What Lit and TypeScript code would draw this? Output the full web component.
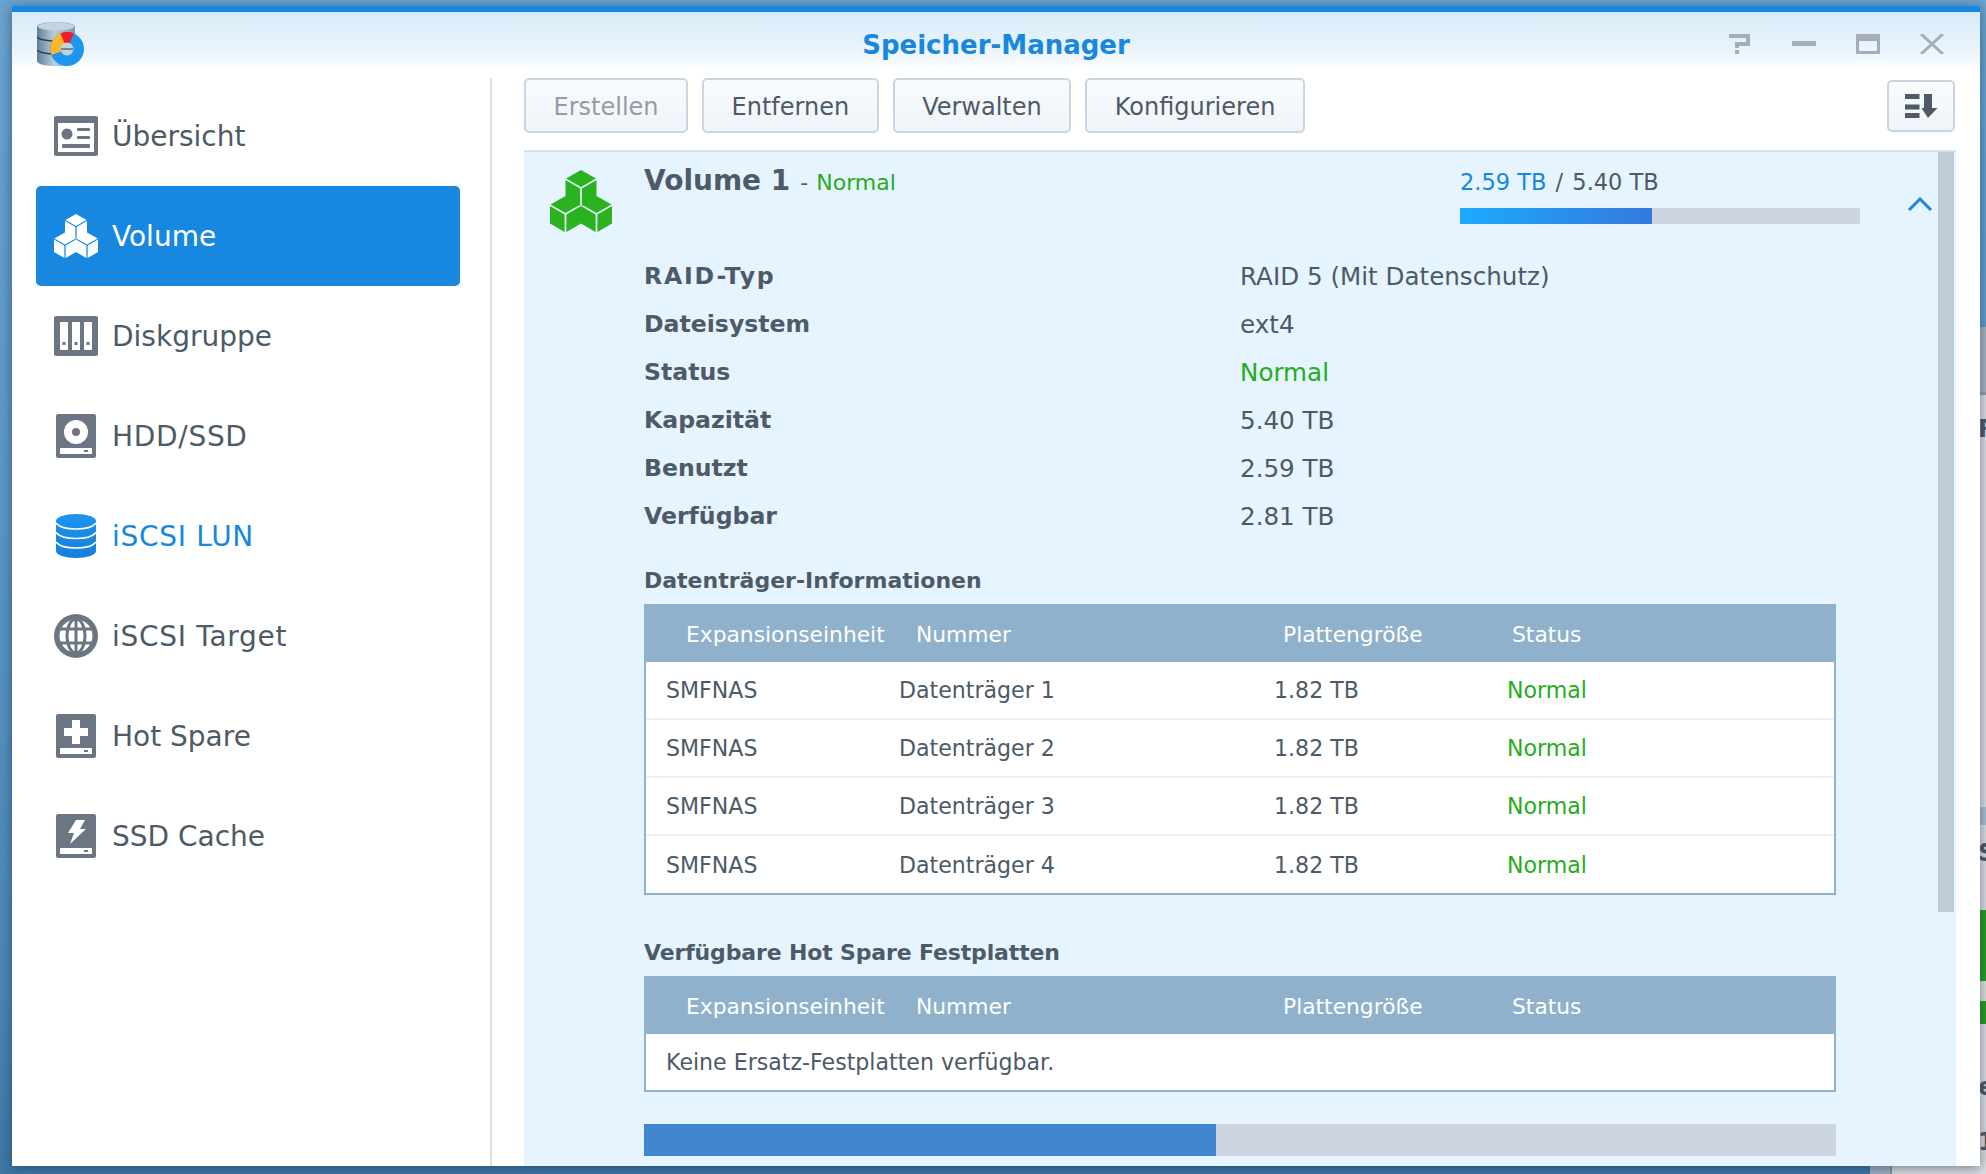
import { LitElement, html, css, svg } from 'lit';
import { customElement } from 'lit/decorators.js';

const cube = (cx: number, ty: number) => svg`
  <path d="M${cx} ${ty}L${cx + 15} ${ty + 8.5}L${cx} ${ty + 17}L${cx - 15} ${ty + 8.5}Z" />
  <path d="M${cx - 15.5} ${ty + 10}L${cx - 0.9} ${ty + 18.4}V${ty + 36}L${cx - 15.5} ${ty + 27.5}Z" />
  <path d="M${cx + 15.5} ${ty + 10}L${cx + 0.9} ${ty + 18.4}V${ty + 36}L${cx + 15.5} ${ty + 27.5}Z" />
`;

const cubes = (color: string, size: number) => html`
  <svg width="${size}" height="${size}" viewBox="0 0 62 62" fill="${color}">
    ${cube(31, 0)}${cube(15.5, 26)}${cube(46.5, 26)}
  </svg>
`;

const driveBar = svg`
  <rect x="4" y="34" width="32" height="6" fill="#fff" />
  <rect x="28" y="36" width="4" height="2" fill="#6b7682" />
`;

const ICONS: Record<string, unknown> = {
  overview: html`<svg width="44" height="40" viewBox="0 0 44 40">
    <rect width="44" height="40" rx="2" fill="#6b7682" />
    <rect x="4" y="7" width="36" height="29" fill="#fff" />
    <circle cx="13" cy="18" r="5.5" fill="#6b7682" />
    <rect x="23" y="12" width="13" height="3" rx="1" fill="#6b7682" />
    <rect x="23" y="20" width="13" height="3" rx="1" fill="#6b7682" />
    <rect x="8" y="28" width="28" height="4" rx="1" fill="#6b7682" />
  </svg>`,
  group: html`<svg width="44" height="40" viewBox="0 0 44 40">
    <rect width="44" height="40" rx="2" fill="#6b7682" />
    <rect x="6" y="6" width="8" height="28" fill="#fff" />
    <rect x="18" y="6" width="8" height="28" fill="#fff" />
    <rect x="30" y="6" width="8" height="28" fill="#fff" />
    <rect x="8.5" y="26" width="3" height="3" fill="#6b7682" />
    <rect x="20.5" y="26" width="3" height="3" fill="#6b7682" />
    <rect x="32.5" y="26" width="3" height="3" fill="#6b7682" />
  </svg>`,
  hdd: html`<svg width="40" height="44" viewBox="0 0 40 44">
    <rect width="40" height="44" rx="2" fill="#6b7682" />
    <circle cx="20" cy="18" r="12" fill="#fff" />
    <circle cx="20" cy="18" r="4" fill="#6b7682" />
    ${driveBar}
  </svg>`,
  lun: html`<svg width="40" height="44" viewBox="0 0 40 44">
    <defs>
      <linearGradient id="db" x1="0" y1="0" x2="0" y2="1">
        <stop offset="0" stop-color="#1f95ee" />
        <stop offset="1" stop-color="#1580dc" />
      </linearGradient>
    </defs>
    <path d="M0 7C0 3 9 0 20 0S40 3 40 7V37C40 41 31 44 20 44S0 41 0 37Z" fill="url(#db)" />
    <g fill="none" stroke="#fff" stroke-width="1.6">
      <path d="M0 9C3 13 11 15 20 15S37 13 40 9" />
      <path d="M0 18.5C3 22.5 11 24.5 20 24.5S37 22.5 40 18.5" />
      <path d="M0 28C3 32 11 34 20 34S37 32 40 28" />
    </g>
  </svg>`,
  globe: html`<svg width="44" height="44" viewBox="0 0 44 44">
    <circle cx="22" cy="22" r="22" fill="#6b7682" />
    <circle cx="22" cy="22" r="16.5" fill="#fff" />
    <g fill="none" stroke="#6b7682" stroke-width="3">
      <ellipse cx="22" cy="22" rx="9" ry="17" />
      <path d="M22 4V40M4 15H40M4 29H40" />
    </g>
  </svg>`,
  spare: html`<svg width="40" height="44" viewBox="0 0 40 44">
    <rect width="40" height="44" rx="2" fill="#6b7682" />
    <path d="M16 6H24V14H32V22H24V30H16V22H8V14H16Z" fill="#fff" />
    ${driveBar}
  </svg>`,
  cache: html`<svg width="40" height="44" viewBox="0 0 40 44">
    <rect width="40" height="44" rx="2" fill="#6b7682" />
    <path d="M20 6H29L24 15H30L14 30L18 19H12Z" fill="#fff" />
    ${driveBar}
  </svg>`,
};

const NAV = [
  { label: 'Übersicht', icon: 'overview' },
  { label: 'Volume', icon: 'volume', active: true },
  { label: 'Diskgruppe', icon: 'group' },
  { label: 'HDD/SSD', icon: 'hdd', wide: true },
  { label: 'iSCSI LUN', icon: 'lun', link: true, wide: true },
  { label: 'iSCSI Target', icon: 'globe', wide: true },
  { label: 'Hot Spare', icon: 'spare' },
  { label: 'SSD Cache', icon: 'cache' },
];

const INFO = [
  ['RAID-Typ', 'RAID 5 (Mit Datenschutz)'],
  ['Dateisystem', 'ext4'],
  ['Status', 'Normal'],
  ['Kapazität', '5.40 TB'],
  ['Benutzt', '2.59 TB'],
  ['Verfügbar', '2.81 TB'],
];

@customElement('app-root')
export class AppRoot extends LitElement {
  static styles = css`
    :host {
      display: block;
      position: relative;
      width: 1986px;
      height: 1174px;
      overflow: hidden;
      background: linear-gradient(180deg, #6ba4d0 0%, #5a98c8 45%, #4b87b6 85%, #3f78a6 100%);
      font-family: 'DejaVu Sans', Verdana, sans-serif;
      color: #4d5a67;
    }
    .back {
      position: absolute;
      left: 1870px;
      top: 327px;
      width: 116px;
      height: 847px;
      background: #dcdfe3;
    }
    .back-side {
      position: absolute;
      left: 0;
      top: 0;
      width: 20px;
      height: 847px;
      background: #a3b3c3;
      border-right: 2px solid #8c97a3;
    }
    .back-head {
      position: relative;
      height: 65px;
      background: #a8b5c2;
      border-bottom: 3px solid #9a9ea3;
    }
    .back-strip {
      position: absolute;
      left: 0;
      width: 116px;
      height: 18px;
      top: 480px;
      background: #a9c0d6;
    }
    .back-green {
      position: absolute;
      left: 110px;
      top: 583px;
      width: 6px;
      height: 114px;
      background: #2a9c22;
    }
    .back-notch {
      position: absolute;
      left: 110px;
      top: 654px;
      width: 6px;
      height: 20px;
      background: #dfe3df;
    }
    .back-frag {
      position: absolute;
      left: 108px;
      font-size: 24px;
      font-weight: bold;
      line-height: 24px;
      color: #4d5a67;
    }
    .window {
      position: absolute;
      left: 12px;
      top: 6px;
      width: 1968px;
      height: 1160px;
      display: flex;
      flex-direction: column;
      background: #fff;
      border-top: 6px solid #1787e0;
      box-sizing: border-box;
      box-shadow: 0 2px 12px rgba(20, 40, 60, 0.55);
    }
    .titlebar {
      height: 60px;
      flex: none;
      position: relative;
      display: flex;
      align-items: center;
      justify-content: center;
      background: linear-gradient(180deg, #d9ebf8 0%, #e9f3fb 60%, #ffffff 100%);
    }
    .title {
      font-size: 26px;
      font-weight: bold;
      color: #1787e0;
      margin-top: 6px;
    }
    .logo {
      position: absolute;
      left: 25px;
      top: 10px;
    }
    .controls {
      position: absolute;
      right: 36px;
      top: 22px;
      display: flex;
      gap: 40px;
    }
    .body {
      flex: 1;
      display: flex;
      min-height: 0;
    }
    .sidebar {
      width: 480px;
      flex: none;
      box-sizing: border-box;
      margin-top: 6px;
      padding: 8px 30px 0 24px;
      border-right: 2px solid #e2e2e2;
    }
    .nav-item {
      height: 100px;
      display: flex;
      align-items: center;
      border-radius: 5px;
      font-size: 28px;
    }
    .nav-item.wide {
      letter-spacing: 0.7px;
    }
    .nav-icon {
      width: 44px;
      margin-left: 18px;
      margin-right: 14px;
      display: flex;
      justify-content: center;
    }
    .nav-icon svg {
      display: block;
    }
    .nav-item.active {
      background: #1787e0;
      color: #fff;
    }
    .nav-item.link {
      color: #1787e0;
    }
    .main {
      flex: 1;
      min-width: 0;
      display: flex;
      flex-direction: column;
      padding: 6px 24px 0 32px;
    }
    .toolbar {
      height: 55px;
      flex: none;
      display: flex;
      gap: 14px;
      align-items: center;
    }
    .btn {
      height: 55px;
      box-sizing: border-box;
      padding: 2px 27.5px 0;
      display: flex;
      align-items: center;
      border: 2px solid #c9d5e1;
      border-radius: 5px;
      background: linear-gradient(180deg, #f9fbfd 0%, #eff4f9 100%);
      font-size: 24px;
    }
    .btn.off {
      color: #939ca7;
    }
    .btn.sort {
      margin-left: auto;
      margin-right: 1px;
      height: 52px;
      width: 68px;
      padding: 0;
      justify-content: center;
    }
    .panel {
      margin-top: 17px;
      flex: 1;
      min-height: 0;
      position: relative;
      overflow: hidden;
      display: flex;
      box-sizing: border-box;
      border-top: 2px solid #d5e3ee;
      background: #e5f4fe;
      padding-left: 26px;
    }
    .scroll {
      position: absolute;
      right: 2px;
      top: 0;
      width: 16px;
      height: 760px;
      background: #becdd6;
    }
    .vol-icon {
      width: 94px;
      flex: none;
      padding-top: 18px;
    }
    .vol-icon svg {
      display: block;
    }
    .content {
      width: 1192px;
      flex: none;
    }
    .chev {
      margin-left: 72px;
      margin-top: 45px;
    }
    .head {
      margin-top: 14px;
      display: flex;
      justify-content: space-between;
    }
    .vol-title {
      height: 32px;
      line-height: 32px;
      margin-top: -1px;
      font-size: 22px;
    }
    .vol-title b {
      font-size: 28px;
    }
    .vol-title .dash {
      margin: 0 1px 0 3px;
    }
    .ok {
      color: #27ac1c;
    }
    .usage {
      width: 400px;
      margin-right: -24px;
      flex: none;
      font-size: 22.5px;
      line-height: 32px;
    }
    .usage .used {
      color: #1787e0;
    }
    .usage .slash {
      margin: 0 2px;
    }
    .usage-track {
      margin-top: 10px;
      height: 16px;
      background: #cdd6e0;
    }
    .usage-fill {
      height: 16px;
      background: linear-gradient(90deg, #1cabff, #3578dc);
    }
    .info {
      margin-top: 28px;
      display: grid;
      grid-template-columns: 596px 1fr;
      grid-auto-rows: 48px;
      align-items: center;
      font-size: 24.6px;
    }
    .info b {
      font-size: 23.6px;
    }
    .info b.wide {
      letter-spacing: 1.8px;
    }
    .section {
      height: 32px;
      line-height: 32px;
      margin: 25px 0 7px;
      font-size: 22px;
      font-weight: bold;
    }
    .section.second {
      margin-top: 42px;
      letter-spacing: -0.15px;
    }
    .row {
      display: grid;
      align-items: center;
    }
    .thead {
      height: 58px;
      box-sizing: border-box;
      padding: 2px 0 0 42px;
      grid-template-columns: 230px 367px 229px 1fr;
      background: #8fb1cb;
      color: #fff;
      font-size: 21.8px;
    }
    .tbody {
      background: #fff;
      border: 2px solid #8fb1cb;
      border-top: none;
      font-size: 22.1px;
    }
    .tbody .row {
      height: 56px;
      padding-left: 20px;
      grid-template-columns: 233px 375px 233px 1fr;
      border-bottom: 2px solid #eaf0f5;
    }
    .tbody .row:last-child {
      height: 57px;
      border-bottom: none;
    }
    .tbody .empty {
      grid-template-columns: 1fr;
      height: 56px !important;
    }
    .bottom-track {
      margin-top: 32px;
      height: 32px;
      background: #cdd6e0;
    }
    .bottom-fill {
      height: 32px;
      background: #4085cd;
    }
  `;

  render() {
    return html`
      <div class="back">
        <div class="back-side"></div>
        <div class="back-head"></div>
        <div class="back-frag" style="top:90px">R</div>
        <div class="back-strip"></div>
        <div class="back-frag" style="top:514px">S</div>
        <div class="back-green"></div>
        <div class="back-notch"></div>
        <div class="back-frag" style="top:748px">e</div>
        <div class="back-frag" style="top:803px">1</div>
      </div>
      <div class="window">
        <div class="titlebar">
          <svg class="logo" width="50" height="50" viewBox="0 0 50 50">
            <defs>
              <linearGradient id="cyl" x1="0" y1="0" x2="1" y2="0">
                <stop offset="0" stop-color="#5f7f97" />
                <stop offset="0.45" stop-color="#b7cfdf" />
                <stop offset="1" stop-color="#7d99ad" />
              </linearGradient>
            </defs>
            <path d="M0 5C0 2 8 0 19 0S38 2 38 5V39C38 42 30 44 19 44S0 42 0 39Z" fill="url(#cyl)" />
            <ellipse cx="19" cy="4.5" rx="18" ry="4" fill="#c3d5e1" />
            <path d="M0 15C3 18 10 19 19 19S35 18 38 15M0 28C3 31 10 32 19 32S35 31 38 28" fill="none" stroke="#2e3d49" stroke-width="1.6" />
            <circle cx="30" cy="27" r="17" fill="#1f96ee" />
            <path d="M30 27L14.5 33A17 17 0 0 1 24 11Z" fill="#fbb52d" />
            <path d="M30 27L23.5 11.5A17 17 0 0 1 37 11.5Z" fill="#ee1c25" />
            <circle cx="30" cy="27" r="6.5" fill="#c2d2dc" />
            <path d="M24 27H36" stroke="#44525e" stroke-width="1.2" />
          </svg>
          <div class="title">Speicher-Manager</div>
          <div class="controls">
            <svg width="24" height="20" viewBox="0 0 24 20" fill="none" stroke="#a5aeb6" stroke-width="4">
              <path d="M1 2H20V10H9V14" />
              <rect x="7" y="16" width="4" height="4" fill="#a5aeb6" stroke="none" />
            </svg>
            <svg width="24" height="20" viewBox="0 0 24 20">
              <rect y="7" width="24" height="5" fill="#a5aeb6" />
            </svg>
            <svg width="24" height="20" viewBox="0 0 24 20" fill="none">
              <path d="M0 0H24V20H0ZM3 7V17H21V7Z" fill="#a5aeb6" fill-rule="evenodd" />
            </svg>
            <svg width="24" height="20" viewBox="0 0 24 20" fill="none" stroke="#a5aeb6" stroke-width="3">
              <path d="M1 0L23 20M23 0L1 20" />
            </svg>
          </div>
        </div>
        <div class="body">
          <nav class="sidebar">
            ${NAV.map(
              (n) => html`
                <div class="nav-item ${n.active ? 'active' : ''} ${n.link ? 'link' : ''} ${n.wide ? 'wide' : ''}">
                  <div class="nav-icon">${n.icon === 'volume' ? cubes('#fff', 46) : ICONS[n.icon]}</div>
                  ${n.label}
                </div>
              `,
            )}
          </nav>
          <div class="main">
            <div class="toolbar">
              <div class="btn off">Erstellen</div>
              <div class="btn">Entfernen</div>
              <div class="btn">Verwalten</div>
              <div class="btn">Konfigurieren</div>
              <div class="btn sort">
                <svg width="33" height="24" viewBox="0 0 33 24" fill="#4f5a65">
                  <rect width="14.5" height="5" />
                  <rect y="10.5" width="14.5" height="5" />
                  <rect y="19" width="14.5" height="5" />
                  <path d="M19 0H27V14H32.5L23 24L16.5 14H19Z" />
                </svg>
              </div>
            </div>
            <div class="panel">
              <div class="vol-icon">${cubes('#2bb21f', 62)}</div>
              <div class="content">
                <div class="head">
                  <div class="vol-title"><b>Volume 1</b><span class="dash"> -</span> <span class="ok">Normal</span></div>
                  <div class="usage">
                    <span class="used">2.59 TB</span><span class="slash"> / </span>5.40 TB
                    <div class="usage-track"><div class="usage-fill" style="width:48%"></div></div>
                  </div>
                </div>
                <div class="info">
                  ${INFO.map(
                    ([k, v], i) => html`<b class="${i === 0 ? 'wide' : ''}">${k}</b><div class="${k === 'Status' ? 'ok' : ''}">${v}</div>`,
                  )}
                </div>
                <div class="section">Datenträger-Informationen</div>
                ${this.tableHead()}
                <div class="tbody">
                  ${[1, 2, 3, 4].map(
                    (i) => html`
                      <div class="row">
                        <div>SMFNAS</div>
                        <div>Datenträger ${i}</div>
                        <div>1.82 TB</div>
                        <div class="ok">Normal</div>
                      </div>
                    `,
                  )}
                </div>
                <div class="section second">Verfügbare Hot Spare Festplatten</div>
                ${this.tableHead()}
                <div class="tbody">
                  <div class="row empty"><div>Keine Ersatz-Festplatten verfügbar.</div></div>
                </div>
                <div class="bottom-track"><div class="bottom-fill" style="width:48%"></div></div>
              </div>
              <svg class="chev" width="24" height="14" viewBox="0 0 24 14" fill="none" stroke="#1787e0" stroke-width="3">
                <path d="M1 13L12 2L23 13" />
              </svg>
              <div class="scroll"></div>
            </div>
          </div>
        </div>
      </div>
    `;
  }

  tableHead() {
    return html`
      <div class="row thead">
        <div>Expansionseinheit</div>
        <div>Nummer</div>
        <div>Plattengröße</div>
        <div>Status</div>
      </div>
    `;
  }
}
